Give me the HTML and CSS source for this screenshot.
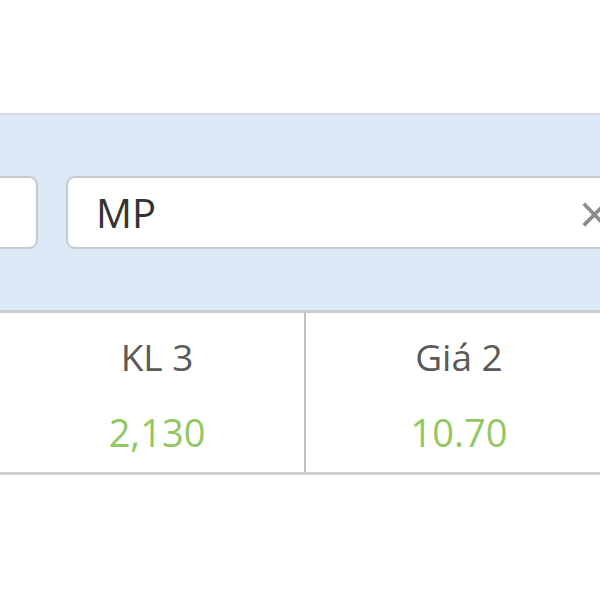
FILE: index.html
```html
<!DOCTYPE html>
<html>
<head>
    <meta charset="utf-8">
    <link rel="stylesheet" href="styles.css">
</head>
<body>
    <div class="top"></div>
    <div class="filter">
        <div class="field field-cut"></div>
        <div class="field field-code">
            <span class="field-text">MP</span>
            <span class="clear">×</span>
        </div>
    </div>
    <div class="quotes">
        <div class="cell cell-first">
            <div class="head">KL 3</div>
            <div class="val">2,130</div>
        </div>
        <div class="cell">
            <div class="head">Giá 2</div>
            <div class="val">10.70</div>
        </div>
    </div>
</body>
</html>
```

FILE: styles.css
```css
html, body {
    margin: 0;
    background: #fff;
    overflow: hidden;
    font-family: "Open Sans", "Noto Sans", sans-serif;
}

.top {
    height: 113px;
}

.filter {
    display: flex;
    align-items: center;
    gap: 28px;
    height: 195px;
    background: #dce9f7;
    border-top: 2px solid #d6dade;
    border-bottom: 3px solid #c9ccd1;
    overflow: hidden;
}

.field {
    box-sizing: border-box;
    height: 73px;
    background: #fff;
    border: 2px solid #c6cacf;
    border-radius: 9px;
    flex-shrink: 0;
}

.field-cut {
    width: 70px;
    margin-left: -32px;
}

.field-code {
    display: flex;
    align-items: center;
    justify-content: space-between;
    width: 548px;
    padding: 0 0 0 28px;
}

.field-text {
    font-size: 40px;
    color: #333;
}

.clear {
    font-size: 54px;
    line-height: 1;
    color: #8c8c8c;
    margin-right: 2px;
}

.quotes {
    display: grid;
    grid-template-columns: 306px 306px;
    height: 159px;
    border-bottom: 3px solid #cfd1d4;
}

.cell {
    text-align: center;
    padding-top: 19px;
}

.cell-first {
    padding-left: 10px;
    border-right: 2px solid #bfc1c4;
}

.head {
    font-size: 37px;
    line-height: 50px;
    color: #5a5a5a;
}

.val {
    font-size: 38px;
    line-height: 52px;
    margin-top: 24px;
    color: #93c763;
}
```
